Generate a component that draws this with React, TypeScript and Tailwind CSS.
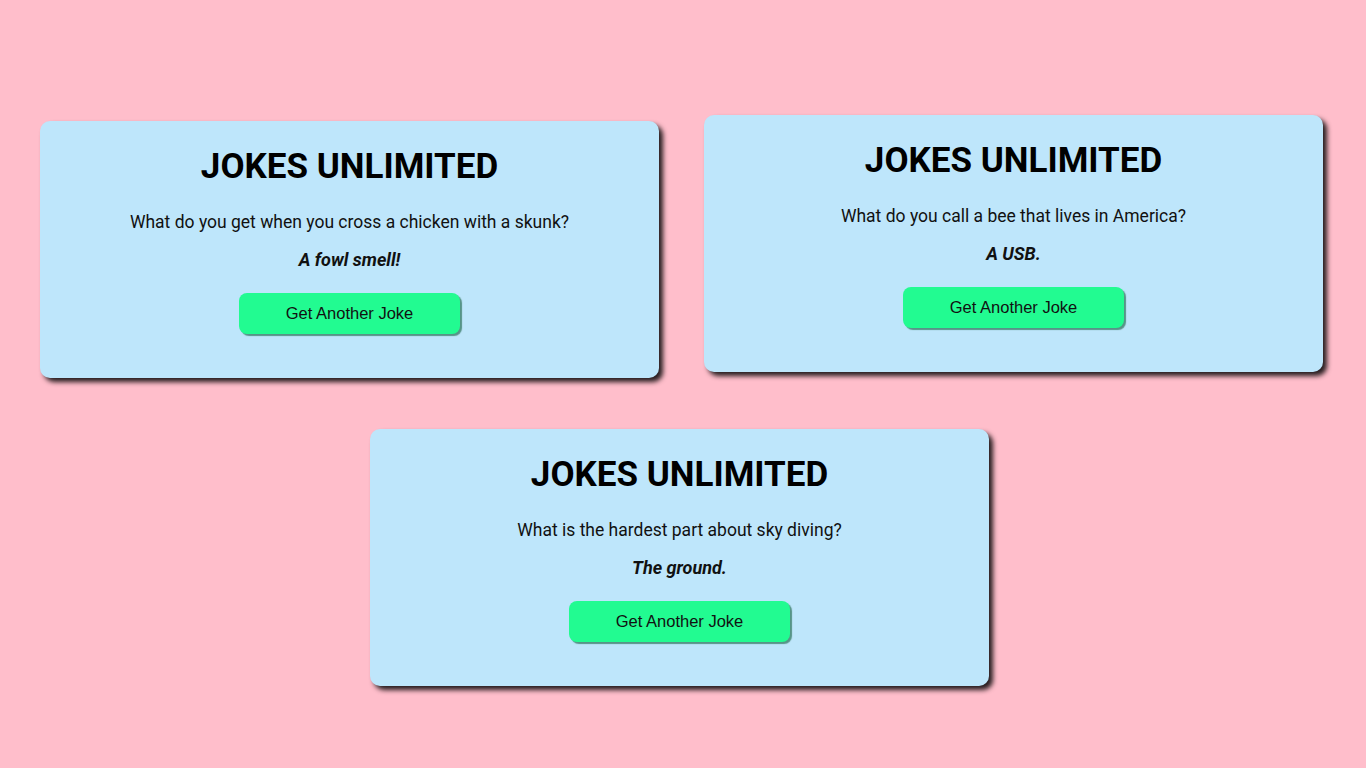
import React from 'react';

type Joke = { question: string; answer: string };

const JokeCard: React.FC<{ joke: Joke; className?: string }> = ({ joke, className = '' }) => {
  return (
    <div
      className={`w-[619px] h-[257px] shrink-0 rounded-[10px] bg-[#bee6fb] shadow-[4px_4px_5px_rgba(0,0,0,0.85)] flex flex-col items-center pt-[25px] ${className}`}
    >
      <h1 className="text-[35px] leading-[41px] font-bold text-black font-['Roboto',sans-serif]">JOKES UNLIMITED</h1>
      <p className="mt-[22px] text-[17.5px] leading-[27px] text-[#111] font-['Roboto',sans-serif]">{joke.question}</p>
      <p className="mt-[10px] text-[18px] leading-[27px] font-bold italic text-[#111] font-['Roboto',sans-serif]">
        {joke.answer}
      </p>
      <button className="mt-[20px] w-[221px] h-[41px] rounded-[8px] bg-[#22fb91] text-[16.5px] text-[#111] font-['Liberation_Sans',Arial,sans-serif] shadow-[2px_2px_1px_rgba(0,80,40,0.55)]">
        Get Another Joke
      </button>
    </div>
  );
};

const App: React.FC = () => {
  const jokes: Joke[] = [
    { question: 'What do you get when you cross a chicken with a skunk?', answer: 'A fowl smell!' },
    { question: 'What do you call a bee that lives in America?', answer: 'A USB.' },
    { question: 'What is the hardest part about sky diving?', answer: 'The ground.' },
  ];

  return (
    <div className="min-h-screen bg-[#ffbecb] pt-[115px]">
      {/* top row */}
      <div className="flex items-start pl-[40px] gap-[45px]">
        <JokeCard joke={jokes[0]} className="mt-[6px]" />
        <JokeCard joke={jokes[1]} />
      </div>
      {/* bottom row */}
      <div className="flex mt-[51px] pl-[370px]">
        <JokeCard joke={jokes[2]} />
      </div>
    </div>
  );
};

export default App;
